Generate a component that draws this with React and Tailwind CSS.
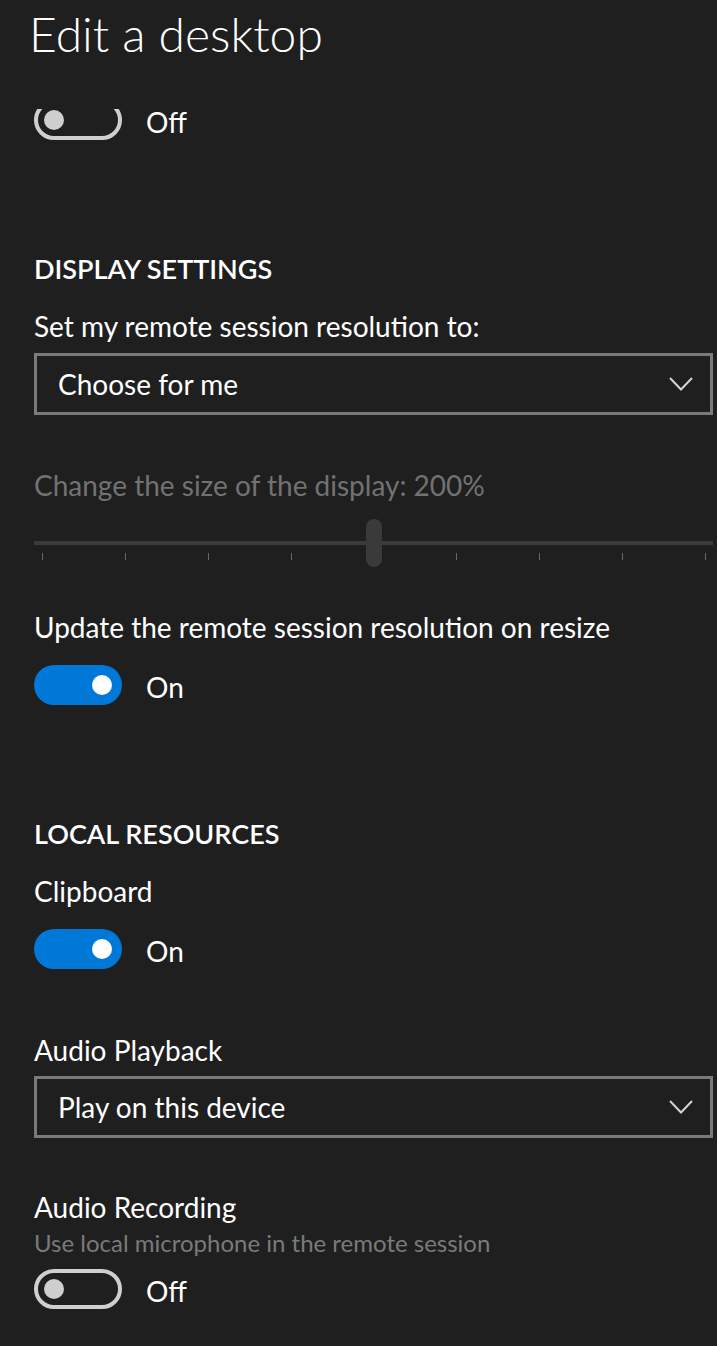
function Switch({ on }) {
  return on ? (
    <div className="flex h-10 w-[88px] shrink-0 items-center justify-end rounded-full bg-[#0078d7] pr-[10px]">
      <div className="h-5 w-5 rounded-full bg-white" />
    </div>
  ) : (
    <div className="flex h-10 w-[88px] shrink-0 items-center justify-start rounded-full border-4 border-[#cfcfcf] pl-[6px]">
      <div className="h-5 w-5 rounded-full bg-[#cfcfcf]" />
    </div>
  );
}

function Toggle({ on }) {
  return (
    <div className="flex items-center gap-6">
      <Switch on={on} />
      <span className="pt-[3px] text-[28px] leading-5 text-white">{on ? 'On' : 'Off'}</span>
    </div>
  );
}

function Dropdown({ value, className }) {
  return (
    <div className={`flex h-[62px] w-[679px] items-center justify-between border-[3px] border-[#7a7a7a] pl-[21px] pr-[17px] ${className}`}>
      <span className="text-[28px] leading-9 text-white">{value}</span>
      <svg width="24" height="14" viewBox="0 0 24 14" className="text-[#d4d4d4]">
        <polyline points="1,1 12,12.5 23,1" fill="none" stroke="currentColor" strokeWidth="2" />
      </svg>
    </div>
  );
}

function Slider() {
  const ticks = [0, 1, 2, 3, 4, 5, 6, 7, 8];
  return (
    <div className="relative mt-4 h-12 w-[679px]">
      <div className="absolute left-0 right-0 top-[22px] h-1 bg-[#3a3a3a]" />
      <div className="absolute left-[8px] right-[7px] top-[34px] flex justify-between">
        {ticks.map((t) => (
          <div key={t} className="h-[7px] w-px bg-[#6a6a6a]" />
        ))}
      </div>
      <div className="absolute left-[332px] top-0 h-12 w-4 rounded-full bg-[#3a3a3a]" />
    </div>
  );
}

export default function App() {
  return (
    <div className="flex h-screen flex-col overflow-hidden bg-[#1f1f1f] font-['Lato',sans-serif] text-white">
      <div className="h-[109px] shrink-0 pl-[29px] pt-[6px]">
        <h1 className="text-[48px] font-light leading-[56px] text-white">Edit a desktop</h1>
      </div>
      <div className="flex flex-col items-start pl-[34px]">
        <div className="flex items-start gap-6">
          <div className="flex h-[31px] items-end overflow-hidden">
            <Switch on={false} />
          </div>
          <span className="mt-[2.5px] text-[28px] leading-5 text-white">Off</span>
        </div>

        <h2 className="mt-[111px] text-[27px] font-semibold leading-9">DISPLAY SETTINGS</h2>
        <p className="mt-[21px] text-[28px] leading-9">Set my remote session resolution to:</p>
        <Dropdown value="Choose for me" className="mt-[9px]" />

        <p className="mt-[52px] text-[28px] leading-9 text-[#727272]">Change the size of the display: 200%</p>
        <Slider />

        <p className="mt-[42px] text-[28px] leading-9">Update the remote session resolution on resize</p>
        <div className="mt-5">
          <Toggle on />
        </div>

        <h2 className="mt-[111px] text-[27px] font-semibold leading-9">LOCAL RESOURCES</h2>
        <p className="mt-[21px] text-[28px] leading-9">Clipboard</p>
        <div className="mt-5">
          <Toggle on />
        </div>

        <p className="mt-[63px] text-[28px] leading-9">Audio Playback</p>
        <Dropdown value="Play on this device" className="mt-2" />

        <p className="mt-[51px] text-[28px] leading-9">Audio Recording</p>
        <p className="mt-1 text-[24px] leading-7 text-[#7a7a7a]">Use local microphone in the remote session</p>
        <div className="mt-3">
          <Toggle on={false} />
        </div>
      </div>
    </div>
  );
}
